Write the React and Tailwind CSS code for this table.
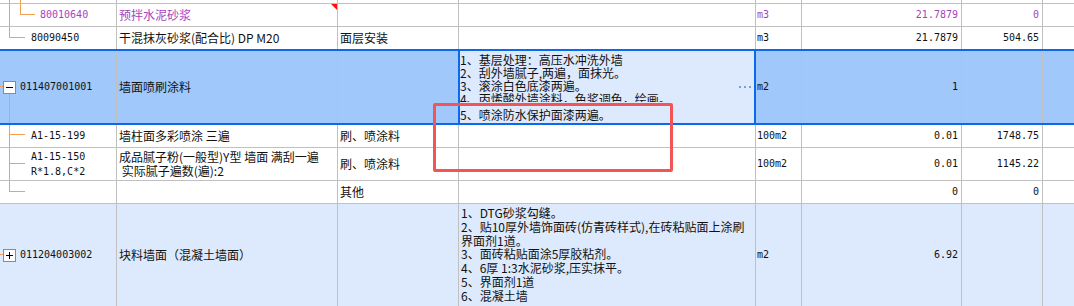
import React from "react";

const CJK = "font-['Noto_Sans_CJK_SC',sans-serif] text-[12px] leading-[14px]";
const MONO = "font-['DejaVu_Sans_Mono','Noto_Sans_CJK_SC',monospace] text-[10px] leading-[14px]";
const LINE = "border-r border-[#c0c0c0]";
const OR = "absolute bg-[#f2a055]";

function Box({ plus }) {
  return (
    <div className="relative w-[13px] h-[13px] shrink-0 border border-[#8a8a8a] bg-white">
      <div className="absolute left-[2px] top-[5px] w-[7px] h-px bg-black" />
      {plus && <div className="absolute left-[5px] top-[2px] w-px h-[7px] bg-black" />}
    </div>
  );
}

function Cells({ c1, c2, c3, c4, c5, c6, c7, blue, purple, c1cls = "", c4cls = "", c2cls = "" }) {
  const txt = purple ? "text-[#a444bc]" : "text-[#111]";
  return (
    <>
      <div className={`relative w-[117px] shrink-0 h-full flex items-center ${LINE} ${c1cls}`}>{c1}</div>
      <div className={`relative w-[221px] shrink-0 h-full flex items-center pl-[2px] whitespace-pre ${LINE} ${CJK} ${txt} ${c2cls}`}>{c2}</div>
      {blue ? (
        <div className="w-[120px] shrink-0 h-full" />
      ) : (
        <div className={`w-[121px] shrink-0 h-full flex items-center pl-[2px] ${LINE} ${CJK} ${txt}`}>{c3}</div>
      )}
      {c4}
      <div className={`w-[46px] shrink-0 h-full flex items-center pl-[1px] ${LINE} ${MONO} ${txt}`}>{c5}</div>
      <div className={`w-[160px] shrink-0 h-full flex items-center justify-end pr-[3px] ${LINE} ${MONO} ${txt}`}>{c6}</div>
      <div className={`w-[81px] shrink-0 h-full flex items-center justify-end pr-[3px] ${LINE} ${MONO} ${txt}`}>{c7}</div>
      <div className="flex-1 h-full" />
    </>
  );
}

const Desc = ({ children }) => (
  <div className={`w-[297px] shrink-0 h-full pl-[2px] overflow-hidden ${LINE} ${CJK}`}>{children}</div>
);

export default function App() {
  return (
    <div className="relative w-[1074px] h-[306px] overflow-hidden bg-white">
      {/* partial row above */}
      <div className="flex h-[4px] border-b border-[#c0c0c0]">
        <Cells
          c1={
            <>
              <div className={`${OR} left-[9px] top-0 bottom-0 w-px`} />
              <div className={`${OR} left-[20px] top-0 bottom-0 w-px`} />
            </>
          }
          c4={<Desc />}
        />
      </div>

      {/* row 1 */}
      <div className="flex h-[23px] border-b border-[#c0c0c0]">
        <Cells
          purple
          c1={
            <>
              <div className={`${OR} left-[9px] top-0 bottom-0 w-px`} />
              <div className={`${OR} left-[20px] top-0 h-[11px] w-px`} />
              <div className={`${OR} left-[20px] top-[10px] w-[15px] h-px`} />
              <span className={`pl-[40px] ${MONO} text-[#a444bc]`}>80010640</span>
            </>
          }
          c2={
            <>
              预拌水泥砂浆
              <div className="absolute right-0 top-0 w-0 h-0 border-l-[6px] border-l-transparent border-t-[6px] border-t-[#ff1010]" />
            </>
          }
          c4={<Desc />}
          c5="m3"
          c6="21.7879"
          c7="0"
        />
      </div>

      {/* row 2 */}
      <div className="flex h-[22px]">
        <Cells
          c1={
            <>
              <div className={`${OR} left-[9px] top-0 h-[11px] w-px`} />
              <div className={`${OR} left-[9px] top-[10px] w-[16px] h-px`} />
              <span className={`pl-[31px] ${MONO} text-[#111]`}>80090450</span>
            </>
          }
          c2="干混抹灰砂浆(配合比) DP M20"
          c3="面层安装"
          c4={<Desc />}
          c5="m3"
          c6="21.7879"
          c7="504.65"
        />
      </div>

      {/* selected row */}
      <div className="flex h-[76px] border-y-2 border-[#0b69f0] bg-[#a0c8fb]">
        <Cells
          blue
          c1={
            <>
              <div className={`${OR} left-0 top-[35px] w-[3px] h-px`} />
              <div className={`${OR} left-[9px] top-[42px] bottom-0 w-px`} />
              <div className="ml-[3px] flex items-center gap-[4px]">
                <Box />
                <span className={`${MONO} text-[#111]`}>011407001001</span>
              </div>
            </>
          }
          c2="墙面喷刷涂料"
          c4={
            <div className={`relative w-[298px] shrink-0 h-full border-x-2 border-[#0b69f0] bg-[#dde9fc] pt-[2px] overflow-hidden whitespace-nowrap text-[#111] font-['Noto_Sans_CJK_SC',sans-serif] text-[12px] leading-[13px]`}>
              <div>1、基层处理：高压水冲洗外墙</div>
              <div>2、刮外墙腻子,两遍，面抹光。</div>
              <div>3、滚涂白色底漆两遍。</div>
              <div className="h-[10px] overflow-hidden">4、丙烯酸外墙涂料，色浆调色，绘画。</div>
              <div className="mt-[6px]">5、喷涂防水保护面漆两遍。</div>
              <div className="absolute right-[3px] top-[35px] flex gap-[3px]">
                <div className="w-[2px] h-[2px] bg-[#7f9fd0]" />
                <div className="w-[2px] h-[2px] bg-[#7f9fd0]" />
                <div className="w-[2px] h-[2px] bg-[#7f9fd0]" />
              </div>
            </div>
          }
          c5="m2"
          c6="1"
          c7=""
        />
      </div>

      {/* child 1 */}
      <div className="flex h-[23px] border-b border-[#c0c0c0]">
        <Cells
          c1={
            <>
              <div className={`${OR} left-[9px] top-0 bottom-0 w-px`} />
              <div className={`${OR} left-[9px] top-[9px] w-[16px] h-px`} />
              <span className={`pl-[31px] ${MONO} text-[#111]`}>A1-15-199</span>
            </>
          }
          c2="墙柱面多彩喷涂 三遍"
          c3="刷、喷涂料"
          c4={<Desc />}
          c5="100m2"
          c6="0.01"
          c7="1748.75"
        />
      </div>

      {/* child 2 */}
      <div className="flex h-[33px] border-b border-[#c0c0c0]">
        <Cells
          c1={
            <>
              <div className={`${OR} left-[9px] top-0 bottom-0 w-px`} />
              <div className={`${OR} left-[9px] top-[15px] w-[16px] h-px`} />
              <div className={`pl-[31px] ${MONO} leading-[15px] text-[#111]`}>
                <div>A1-15-150</div>
                <div>R*1.8,C*2</div>
              </div>
            </>
          }
          c2={
            <div>
              <div>成品腻子粉(一般型)Y型 墙面 满刮一遍</div>
              <div> 实际腻子遍数(遍):2</div>
            </div>
          }
          c2cls="leading-[13px]"
          c3="刷、喷涂料"
          c4={<Desc />}
          c5="100m2"
          c6="0.01"
          c7="1145.22"
        />
      </div>

      {/* child 3 */}
      <div className="flex h-[23px] border-b border-[#c0c0c0]">
        <Cells
          c1={
            <>
              <div className={`${OR} left-[9px] top-0 h-[11px] w-px`} />
              <div className={`${OR} left-[9px] top-[10px] w-[16px] h-px`} />
            </>
          }
          c2=""
          c3="其他"
          c4={<Desc />}
          c5=""
          c6="0"
          c7="0"
        />
      </div>

      {/* last row */}
      <div className="flex h-[103px] border-b border-[#c0c0c0] bg-[#dde9fc]">
        <Cells
          c1={
            <>
              <div className={`${OR} left-0 top-[50px] w-[3px] h-px`} />
              <div className="ml-[3px] flex items-center gap-[4px]">
                <Box plus />
                <span className={`${MONO} text-[#111]`}>011204003002</span>
              </div>
            </>
          }
          c2="块料墙面（混凝土墙面）"
          c3=""
          c4={
            <div className={`w-[297px] shrink-0 h-full pl-[2px] pt-[2px] overflow-hidden whitespace-nowrap text-[#111] ${LINE} font-['Noto_Sans_CJK_SC',sans-serif] text-[12px] leading-[13.8px]`}>
              <div>1、DTG砂浆勾缝。</div>
              <div>2、贴10厚外墙饰面砖(仿青砖样式),在砖粘贴面上涂刷</div>
              <div>界面剂1道。</div>
              <div>3、面砖粘贴面涂5厚胶粘剂。</div>
              <div>4、6厚 1:3水泥砂浆,压实抹平。</div>
              <div>5、界面剂1道</div>
              <div>6、混凝土墙</div>
            </div>
          }
          c5="m2"
          c6="6.92"
          c7=""
        />
      </div>

      {/* red annotation rectangle */}
      <div className="absolute left-[433px] top-[103px] w-[240px] h-[69px] border-[3px] border-[#f25555] rounded-[2px] pointer-events-none" />
    </div>
  );
}
